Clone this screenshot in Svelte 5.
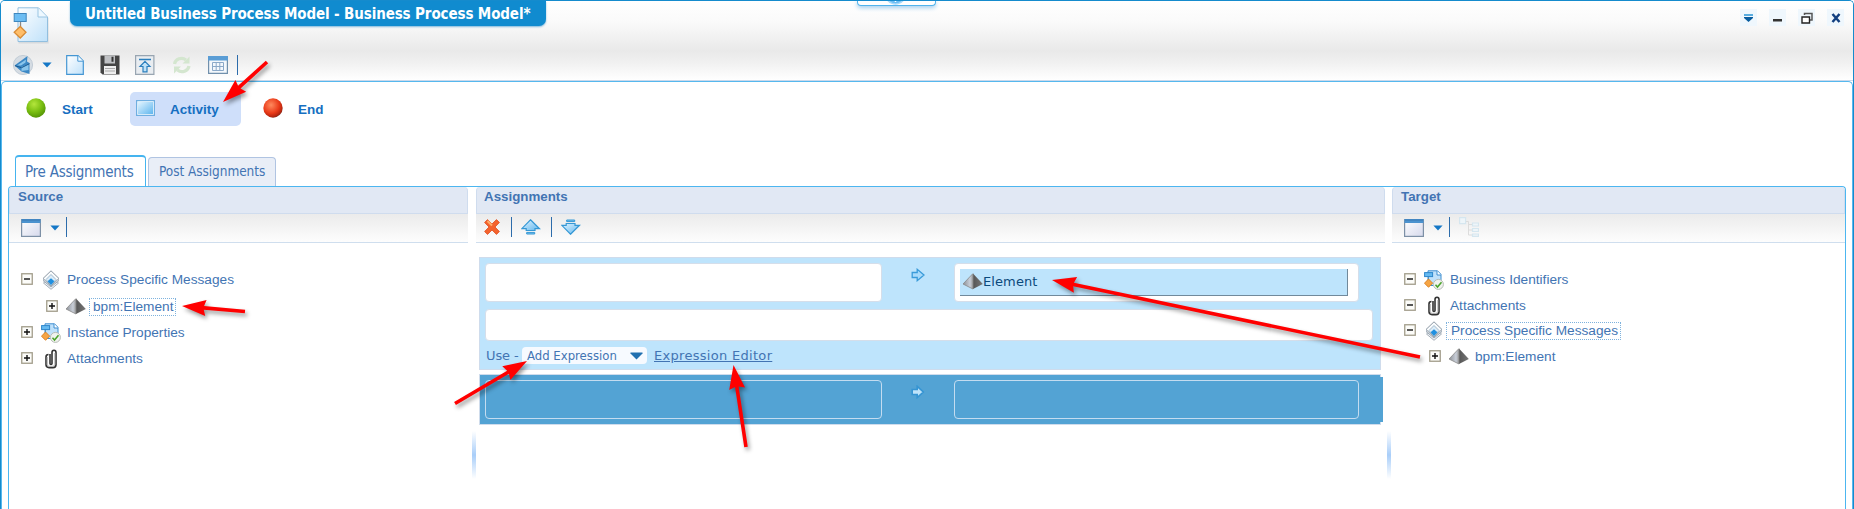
<script>
  const sourceTree = [
    { label: 'Process Specific Messages', icon: 'message', open: true, h: 27 },
    { label: 'bpm:Element', icon: 'pyramid', child: true, focus: true, h: 27 },
    { label: 'Instance Properties', icon: 'props', h: 26 },
    { label: 'Attachments', icon: 'clip', h: 25 }
  ];
  const targetTree = [
    { label: 'Business Identifiers', icon: 'props', open: true, h: 27 },
    { label: 'Attachments', icon: 'clip', open: true, h: 25 },
    { label: 'Process Specific Messages', icon: 'message', open: true, focus: true, h: 25 },
    { label: 'bpm:Element', icon: 'pyramid', child: true, h: 27 }
  ];

  function arrow(tx, ty, x, y) {
    const d = Math.hypot(tx - x, ty - y);
    const ux = (tx - x) / d;
    const uy = (ty - y) / d;
    const p = (back, side) => `${tx - ux * back - uy * side},${ty - uy * back + ux * side}`;
    return [p(0, 0), p(24, 8), p(22, 1.8), p(d, 1.8), p(d, -1.8), p(22, -1.8), p(24, -8)].join(' ');
  }
  const arrows = [
    arrow(223, 102, 267, 62),
    arrow(182, 306, 245, 311.5),
    arrow(527, 361, 455, 403.5),
    arrow(733.5, 365, 746, 447),
    arrow(1052, 280, 1420, 357)
  ];
</script>

{#snippet pyramid()}
  <svg width="20" height="17" viewBox="0 0 20 17">
    <path d="M10 .5 0 11 10 16Z" fill="url(#pyl)" /><path d="M10 .5 19.8 11 10 16Z" fill="url(#pyr)" />
    <path d="M10 .5 0 11 10 16V1" fill="none" stroke="#888" stroke-width=".8" />
  </svg>
{/snippet}

{#snippet treeIcon(kind)}
  {#if kind === 'message'}
    <svg width="18" height="20" viewBox="0 0 18 20">
      <path d="M9 6.5 16.5 13 9 19.3 1.5 13Z" fill="#eef2f6" stroke="#a4aeb8" />
      <path d="M9 3.5 17 10.5 9 17 1 10.5Z" fill="#f2f5f8" stroke="#9ba7b3" />
      <path d="M9 .8 17 8.500 9 16 1 8.500Z" fill="#fafcfd" stroke="#8b97a3" />
      <path d="M9 4.500 14 9.5 9 15.5 4 9.5Z" fill="#dcecf8" stroke="#8fa9be" stroke-width=".8" />
      <path d="M9 8.2 12.4 11.3 9 15 5.6 11.3Z" fill="#2090e0" />
    </svg>
  {:else if kind === 'pyramid'}
    {@render pyramid()}
  {:else if kind === 'props'}
    <svg width="20" height="20" viewBox="0 0 20 20">
      <path d="M4 .8H13.5L17 4.3V15.5H4Z" fill="#bfe1fb" stroke="#3f8ed0" />
      <path d="M13 .8V5h4" fill="#fff" stroke="#3f8ed0" />
      <path d="M4.5 5V15" stroke="#5a95ba" />
      <rect x=".6" y="2.6" width="8" height="4" fill="#65baf1" stroke="#2e87cc" />
      <path d="M4.5 9 8.7 13.2 4.5 17.2.5 13.2Z" fill="#f6a544" stroke="#dc8225" />
      <circle cx="14.4" cy="14.4" r="5" fill="#f0f2ee" stroke="#b7bcb6" />
      <path d="m11.5 14.8 2 2.2 4-4.8" fill="none" stroke="#49a329" stroke-width="1.5" />
    </svg>
  {:else}
    <svg width="14" height="20" viewBox="0 0 14 20">
      <path d="M6 5V14.500q0 1 1 1t1-1V3.500Q8 1.200 10 1.200T12 3.500v12.300q0 2.800-3 2.800H5q-3 0-3-3V8q0-2.500 2.500-2.500" fill="none" stroke="#333" stroke-width="1.6" />
      <path d="M3.300 8v8q0 1.300 2 1.300h3.500q2 0 2-2V4" fill="none" stroke="#aaa" stroke-width=".9" />
    </svg>
  {/if}
{/snippet}

{#snippet tree(rows)}
  <ul class="tree">
    {#each rows as r}
      <li class:child={r.child} style:height="{r.h}px">
        <svg class="toggle" width="12" height="12" viewBox="0 0 12 12">
          <rect x=".75" y=".75" width="10.5" height="10.5" fill="#fcfcf9" stroke="#a29d8b" stroke-width="1.3" />
          <path d={r.open ? 'M3 6H9' : 'M3 6H9M6 3V9'} stroke="#111" stroke-width="1.4" />
        </svg>
        <span class="ticon">{@render treeIcon(r.icon)}</span>
        <span class="label" class:focus={r.focus}>{r.label}</span>
      </li>
    {/each}
  </ul>
{/snippet}

{#snippet viewTools()}
  <svg class="view" width="20" height="18" viewBox="0 0 20 18">
    <rect x=".6" y=".6" width="18.8" height="16.8" fill="url(#win)" stroke="#7d90a6" stroke-width="1.2" />
    <path d="M.5 0h19v4H.5z" fill="#4c93cf" /><path d="M1 1h18" stroke="#3b78b2" />
  </svg>
  <svg class="drop" width="10" height="6" viewBox="0 0 10 6"><path d="M.4.5h9.2L5 5.6Z" fill="#1477c6" /></svg>
  <i class="sep"></i>
{/snippet}

{#snippet right(small)}
  <svg class="go" width="14" height="14" viewBox="0 0 14 14">
    {#if small}
      <path d="M1.2 4.5h5V1.3L12.3 7 6.2 12.6V9.5h-5Z" fill="#bfe3fa" stroke="#3695d3" stroke-width="1.6" />
    {:else}
      <path d="M1.2 4.5h5V1.3L13 7 6.2 12.7V9.5h-5Z" fill="#a8dafb" stroke="#3a9bd9" stroke-width="1.3" />
    {/if}
  </svg>
{/snippet}

<svg class="defs" width="0" height="0">
  <defs>
    <linearGradient id="page" x1="0" y1="0" x2="1" y2="1"><stop stop-color="#fff" /><stop offset="1" stop-color="#bfe1fa" /></linearGradient>
    <linearGradient id="win" x1="0" y1="0" x2="1" y2="1"><stop stop-color="#fff" /><stop offset="1" stop-color="#d6d9ec" /></linearGradient>
    <linearGradient id="pyl"><stop stop-color="#8c8f95" /><stop offset=".7" stop-color="#c8ced8" /><stop offset="1" stop-color="#999" /></linearGradient>
    <linearGradient id="pyr"><stop stop-color="#555" /><stop offset="1" stop-color="#777" /></linearGradient>
    <linearGradient id="blue" x1="0" y1="0" x2="1" y2="1"><stop stop-color="#e2f4ff" /><stop offset="1" stop-color="#5fb6ee" /></linearGradient>
    <radialGradient id="green" cx=".4" cy=".3" r=".7"><stop stop-color="#b4e63c" /><stop offset=".6" stop-color="#78bd10" /><stop offset="1" stop-color="#569606" /></radialGradient>
    <radialGradient id="red" cx=".4" cy=".35" r=".7"><stop stop-color="#ff8a5e" /><stop offset=".6" stop-color="#ea3a18" /><stop offset=".85" stop-color="#b8260f" /><stop offset="1" stop-color="#6e2a20" /></radialGradient>
  </defs>
</svg>

<div class="window">
  <header>
    <div class="titlebar">
      <svg class="logo" width="38" height="38" viewBox="0 0 38 38">
        <path d="M5 1H25.5L35 10V35.5H5Z" fill="#a8b4be" opacity=".35" transform="translate(.6 .9)" />
        <path d="M5 .8H25.5L34.5 10V34.5H5Z" fill="url(#page)" stroke="#92bfdf" />
        <path d="M25 1V10h9" fill="#eef8ff" stroke="#9ac5e2" />
        <path d="M7.5 14v6" stroke="#888" stroke-width="1.3" />
        <rect x="1.2" y="6.5" width="12" height="8" fill="#6cbdf3" stroke="#3f87be" />
        <path d="M7.3 19.5 13 25.3 7.3 31 1.2 25.3Z" fill="#ffbe69" stroke="#d88c36" stroke-width="1.3" />
      </svg>
      <h1>Untitled Business Process Model - Business Process Model*</h1>
      <div class="controls">
        <span><svg width="11" height="8"><path d="M1 0h9v2H1z" fill="#58acdf" /><path d="M1 3h9v1L5.500 8 1 4z" fill="#075c9f" /></svg></span>
        <span><svg width="11" height="8"><path d="M1 5h9v2.500H1z" fill="#333" /></svg></span>
        <span><svg width="12" height="12"><path d="M3.500 3V1.500H11V8H8.500" fill="none" stroke="#555" stroke-width="1.500" /><path d="M1 5h7.500v6H1z" fill="#fff" stroke="#222" stroke-width="1.400" /></svg></span>
        <span><svg width="10" height="10"><path d="m1.500 1 7 8m0-8-7 8" stroke="#123f80" stroke-width="2.500" /></svg></span>
      </div>
    </div>
    <div class="maintools">
      <svg width="20" height="20" viewBox="0 0 20 20">
        <circle cx="10" cy="10" r="9.600" fill="#d5dce3" stroke="#b9c5d0" stroke-width=".8" />
        <path d="M1.500 10.500 14.500 1 14 6.500 16.500 8V19L8.500 16.500Z" fill="#3c88c5" /><path d="m4 10.500 9-6-.5 3L8 10.500Zm4.500 1.500 7-3v6l-7 1Z" fill="#8bc6ec" />
        <path d="m2 10.700 6.500 2 8-4" fill="none" stroke="#17578e" />
      </svg>
      <svg class="m-drop" width="10" height="6" viewBox="0 0 10 6"><path d="M.4.5h9.200L5 5.600Z" fill="#1477c6" /></svg>
      <svg class="m-page" width="18" height="20" viewBox="0 0 18 20">
        <path d="M.7.7H12L17.300 6V19.300H.7Z" fill="url(#page)" stroke="#4496d3" stroke-width="1.200" /><path d="M11.800.7V6.200h5.500" fill="#f6fbff" stroke="#4496d3" />
      </svg>
      <svg class="m-save" width="20" height="20" viewBox="0 0 20 20">
        <path d="M.5.500H19.500V19.500H2.500L.5 17.500Z" fill="#454545" /><path d="M4.500.500H15V8.500H4.500Z" fill="#bfc1c4" /><path d="M11.500 1.800h2v5h-2z" fill="#333" />
        <path d="M4 11h12v8H4z" fill="#eee" /><path d="M5 13.500h10M5 16h10" stroke="#aaa" />
      </svg>
      <svg class="m-up" width="20" height="20" viewBox="0 0 20 20">
        <path d="M.6.600H18.900V19.400H.6Z" fill="#e9edf1" stroke="#98a5b1" stroke-width="1.200" />
        <path d="M4 4.500H16" stroke="#2b7fbd" stroke-width="1.600" /><path d="m10 6.300 5 5.200h-3v5.300H8v-5.300H5Z" fill="#bfe2f8" stroke="#2b7fbd" stroke-width="1.200" />
      </svg>
      <svg class="m-ref" width="20" height="20" viewBox="0 0 20 20">
        <path d="M2.500 9a7 6.500 0 0 1 11.500-4M17 11a7 6.500 0 0 1-11.500 4" fill="none" stroke="#d4e6cf" stroke-width="3.200" />
        <path d="M17.500 1.500V8.500h-7ZM2 18.500v-7H9Z" fill="#d4e6cf" />
      </svg>
      <svg class="m-cal" width="20" height="20" viewBox="0 0 20 20">
        <path d="M.6 1.600H19.400V18.400H.6Z" fill="#f4f8fc" stroke="#7190ac" stroke-width="1.200" /><path d="M0 1h20v4.500H0z" fill="#5a9dd5" />
        <path d="M4.500 7.500h11v8h-11zM8.200 7.500v8M11.800 7.500v8M4.500 11.500h11" fill="none" stroke="#8ba9c8" />
      </svg>
      <i class="sep"></i>
    </div>
  </header>

  <main>
    <nav class="palette">
      <button class="start"><svg width="20" height="20"><circle cx="10" cy="10" r="9.700" fill="url(#green)" /></svg>Start</button>
      <button class="activity"><svg width="19" height="16"><rect x=".6" y=".6" width="17.800" height="14.800" fill="#f1faff" stroke="#6faee0" stroke-width="1.200" /><rect x="2" y="2" width="15" height="12" fill="url(#blue)" /></svg>Activity</button>
      <button class="end"><svg width="20" height="20"><circle cx="10" cy="10" r="9.700" fill="url(#red)" /></svg>End</button>
    </nav>
    <div class="tabs">
      <div class="tab on">Pre Assignments</div>
      <div class="tab off">Post Assignments</div>
    </div>
    <div class="panes">
      <section class="source">
        <h2>Source</h2>
        <div class="tools">{@render viewTools()}</div>
        {@render tree(sourceTree)}
      </section>
      <div class="split"><i></i></div>
      <section class="assign">
        <h2>Assignments</h2>
        <div class="tools atools">
          <svg width="16" height="16" viewBox="0 0 16 16"><path d="M.6 3.500 3.500.600 8 5 12.500.600l2.900 2.900L11 8l4.400 4.500-2.900 2.900L8 11l-4.500 4.400-2.900-2.900L5 8Z" fill="#f4632e" stroke="#e04b1d" stroke-width=".8" /><path d="m3.500 2 4.500 4.500" stroke="#ffae6b" stroke-width="2" /></svg>
          <i class="sep s1"></i>
          <svg class="up" width="20" height="16" viewBox="0 0 20 16"><path d="M9.500.800 18.500 9.700h-4.500v1.800H5.200V9.700H.8Z" fill="url(#blue)" stroke="#3598d5" stroke-width="1.200" /><path d="M5.700 13.400h8v1.600h-8z" fill="#7dc4ef" stroke="#3598d5" /></svg>
          <i class="sep s2"></i>
          <svg class="down" width="20" height="16" viewBox="0 0 20 16"><path d="M9.500 15.200 18.500 6.300h-4.500V4.500H5.200v1.800H.8Z" fill="url(#blue)" stroke="#3598d5" stroke-width="1.200" /><path d="M5.700 1h8v1.600h-8z" fill="#7dc4ef" stroke="#3598d5" /></svg>
        </div>
        <div class="rule">
          <div class="pair">
            <div class="box"></div>
            {@render right(false)}
            <div class="box to"><div class="elem">{@render pyramid()}<span>Element</span></div></div>
          </div>
          <div class="expr"></div>
          <div class="use">
            <span class="u">Use -</span>
            <div class="select"><span>Add Expression</span><svg width="13" height="8"><path d="M.5.500h12v1L6.500 7.500.5 1.500Z" fill="#2270b0" /></svg></div>
            <span class="link">Expression Editor</span>
          </div>
        </div>
        <div class="rule dark">
          <div class="pair">
            <div class="box"></div>
            {@render right(true)}
            <div class="box to"></div>
          </div>
        </div>
      </section>
      <div class="split narrow"><i></i></div>
      <section class="target">
        <h2>Target</h2>
        <div class="tools">{@render viewTools()}
          <svg class="hier" width="20" height="20" viewBox="0 0 20 20"><path d="M.6.600h6v6h-6zM13.500 6h6v3h-6zM13.500 11.500h6v3h-6zM13.500 17h6v2.400h-6z" fill="#eef5f9" stroke="#d5e6ef" stroke-width="1.200" /><path d="M7 4.500h2.500V18H13M9.500 7.500H13M9.500 13H13" fill="none" stroke="#dcdcdc" /></svg>
        </div>
        {@render tree(targetTree)}
      </section>
    </div>
  </main>

  <div class="handle"><svg width="77" height="5"><circle cx="37.500" cy="-6" r="10" fill="#69bdf4" stroke="#a6d9fa" stroke-width="1.500" /><path d="M37.500 0v2" stroke="#fff" stroke-width="1.500" /></svg></div>
  <svg class="notes" width="1854" height="509">
    {#each arrows as a}<polygon points={a} />{/each}
  </svg>
</div>

<style>
  :global(body) { background: #fff; overflow: hidden; }
  * { box-sizing: border-box; }
  svg { display: block; flex: none; }
  .defs { position: absolute; }
  .window { position: relative; width: 1854px; height: 509px; border: 1px solid #158bcd; border-bottom: 0; border-radius: 5px 5px 0 0; font-family: "Liberation Sans", Arial, sans-serif; color: #4274b3; overflow: hidden; }
  header { height: 80px; border-bottom: 1px solid #cbd9eb; background: linear-gradient(#fff 0, #fafafa 27%, #e9e9e9 63%, #f0f0f0 77%, #fff 100%); }
  .titlebar { display: flex; height: 50px; }
  .logo { margin: 6px 0 0 12px; }
  h1 { margin: 0 0 0 19px; width: 476px; height: 25px; padding: 0 0 0 15px; background: #108bcf; border-radius: 0 0 7px 7px; color: #fff; font: bold 15px/26px "DejaVu Sans Condensed", Tahoma, sans-serif; font-stretch: condensed; letter-spacing: -.12px; white-space: nowrap; box-shadow: 0 1px 2px #7db7dc; }
  .controls { display: flex; gap: 12px; margin: 8px 9px 0 auto; }
  .controls span { display: flex; align-items: center; justify-content: center; width: 17px; height: 17px; background: #eff7fd; }
  .maintools { display: flex; align-items: center; height: 28px; margin: 0 0 0 12px; }
  .m-drop { margin-left: 9px; }
  .m-page { margin-left: 14px; }
  .m-save { margin-left: 16px; }
  .m-up { margin-left: 15px; }
  .m-ref { margin-left: 17px; }
  .m-cal { margin-left: 16px; }
  .sep { flex: none; width: 1px; height: 20px; background: #2c6cab; }
  .maintools .sep { margin-left: 9px; }
  main { height: 429px; border: 1px solid #56b8ee; border-bottom: 0; border-radius: 5px 5px 0 0; padding: 10px 6px 0; background: #fff; }
  .palette { display: flex; height: 62px; padding-left: 6px; }
  button { display: flex; align-items: center; height: 34px; border: 0; padding: 0; background: none; border-radius: 5px; color: #166fc1; font: bold 13.500px "Liberation Sans", Arial, sans-serif; }
  .start svg, .end svg, .activity svg { position: relative; top: -1px; }
  .start { margin-left: 12px; width: 104px; gap: 16px; }
  .activity { width: 111px; padding-left: 6px; gap: 15px; background: #cfdffa; }
  .end { margin-left: 22px; gap: 15px; }
  .tabs { display: flex; align-items: flex-end; gap: 2px; height: 32px; padding-left: 7px; }
  .tab { border: 1px solid #b0c4e2; border-bottom: 0; border-radius: 4px 4px 0 0; font-family: "DejaVu Sans Condensed", Tahoma, sans-serif; font-stretch: condensed; white-space: nowrap; }
  .on { width: 131px; height: 31px; padding: 6px 0 0 9px; border: 1px solid #45b4ef; border-top-width: 2px; border-bottom: 0; background: #fff; font-size: 15px; line-height: 18px; letter-spacing: -.25px; }
  .off { width: 128px; height: 29px; padding: 4px 0 0 10px; background: #e9eef7; font-size: 13.500px; line-height: 18px; letter-spacing: -.05px; }
  .panes { display: flex; height: 323px; border: 1px solid #4cb6f0; border-bottom: 0; border-radius: 4px 4px 0 0; }
  .source { width: 459px; }
  .assign { width: 909px; }
  .target { flex: 1; }
  h2 { margin: 0; height: 27px; padding-left: 8px; background: #e1e8f4; border: 1px solid #cfdcee; border-top: 0; border-radius: 4px 4px 0 0; font-size: 13.330px; line-height: 20px; }
  .source h2 { padding-left: 8px; }
  .target h2 { padding-left: 8px; }
  .assign h2 { padding-left: 7px; }
  .tools { display: flex; height: 29px; padding: 0 0 0 12px; background: linear-gradient(#ebebeb, #fdfdfd); border-bottom: 1px solid #cfdeee; }
  .view { margin-top: 5px; }
  .drop { margin: 11px 6px 0 9px; }
  .tools .sep { margin-top: 3px; }
  .hier { margin: 3px 0 0 9px; }
  .atools { padding-left: 8px; }
  .atools svg { margin-top: 5px; }
  .atools .s1 { margin-left: 11px; }
  .atools .up { margin-left: 9px; }
  .atools .s2 { margin-left: 10px; }
  .atools .down { margin-left: 9px; }
  .split { width: 8px; padding: 244px 0 0 4px; }
  .narrow { width: 7px; padding-left: 2px; }
  .split i { display: block; width: 4px; height: 48px; background: linear-gradient(#fff, #a9cef9 50%, #fff); }
  .tree { list-style: none; margin: 0; padding: 23px 0 0 12px; }
  li { display: flex; align-items: center; }
  li.child { padding-left: 25px; }
  .toggle { position: relative; top: -1px; }
  .ticon { width: 20px; margin-left: 8px; display: flex; justify-content: center; }
  .label { height: 18px; line-height: 16px; margin-left: 2px; border: 1px solid transparent; padding: 0 2px 0 3px; font-size: 13.670px; white-space: nowrap; }
  .child .label { margin-left: 3px; }
  .label.focus { border: 1px dotted #7eb2dd; }
  .target .label { margin-left: 2px; }
  .target .label.focus { padding-left: 4px; }
  .rule { position: relative; width: 902px; height: 113px; margin: 14px 0 0 3px; padding: 5px; background: #bee4fc; border: 1px solid #cfdcec; }
  .pair { display: flex; }
  .box { width: 397px; height: 39px; background: #fff; border: 1px solid #d5deea; border-radius: 4px; }
  .go { margin: 5px 29px 0 29px; }
  .to { width: 405px; padding: 5px 0 0 5px; }
  .elem { display: flex; align-items: center; width: 388px; height: 27px; padding: 0 0 1px 3px; background: #bee4fc; border: solid #71899b; border-width: 0 1px 1px 0; color: #0b4a7c; font: 13px "DejaVu Sans", Verdana, sans-serif; letter-spacing: .1px; }
  .expr { width: 888px; height: 32px; margin-top: 7px; background: #fff; border: 1px solid #d5deea; border-radius: 4px; }
  .use { display: flex; margin-top: 6px; height: 17px; font: 13px/18px "DejaVu Sans", Verdana, sans-serif; }
  .u { width: 37px; padding-left: 1px; white-space: nowrap; letter-spacing: -.1px; }
  .select { display: flex; align-items: center; justify-content: space-between; width: 125px; height: 17px; padding: 0 4px 0 5px; background: #f7faff; border-radius: 4px; font: 13px/18px "DejaVu Sans Condensed", Tahoma, sans-serif; font-stretch: condensed; }
  .link { margin-left: 7px; text-decoration: underline; white-space: nowrap; letter-spacing: .3px; }
  .dark { height: 51px; margin-top: 4px; background: #53a3d4; }
  .dark::after { content: ""; position: absolute; right: -3px; top: 2px; width: 3px; height: 45px; background: #53a3d4; }
  .dark .box { background: none; border-color: #c4dcf0; }
  .handle { position: absolute; left: 856px; top: -1px; width: 79px; height: 6px; background: #fff; border: 1px solid #51b4ed; border-top: 0; border-radius: 0 0 4px 4px; box-shadow: 0 2px 4px #a4cfee; }
  .notes { position: absolute; left: -1px; top: -1px; filter: drop-shadow(2px 3px 2px rgba(0, 0, 0, .4)); fill: #f00; pointer-events: none; }
</style>
